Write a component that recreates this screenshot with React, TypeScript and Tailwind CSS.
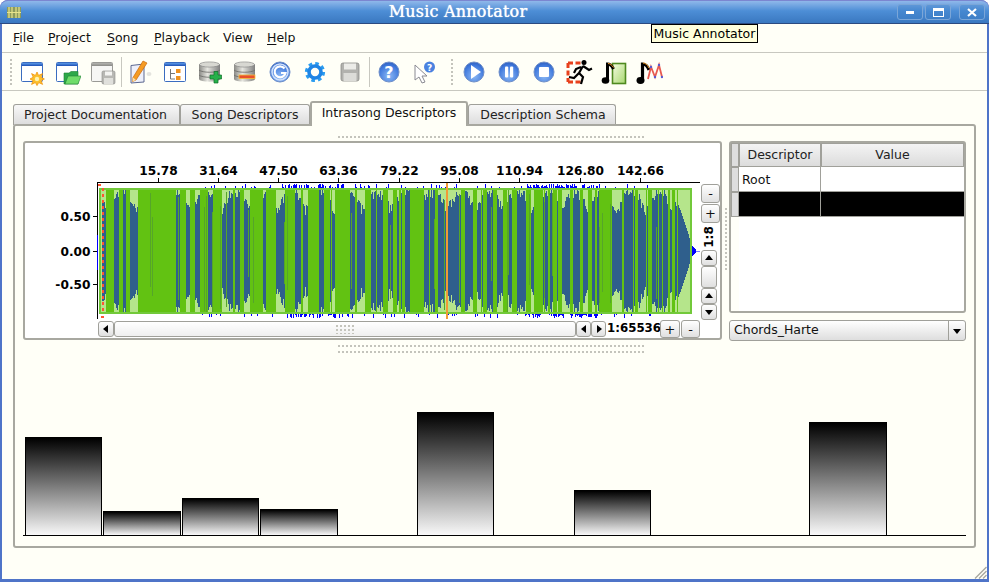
import React from "react";

const rnd = (x: number) => {
  const s = Math.sin(x * 12.9898 + 4.1) * 43758.5453;
  return s - Math.floor(s);
};

const z9 = [[32,58],[72,80],[92,105],[130,242],[255,272],[285,300],[315,340],[355,380],[415,420],[435,447],[465,505],[515,543],[570,600],[618,625],[640,672],[688,704],[720,765],[780,785],[810,828],[865,880],[895,905]];
const z10 = [[5,15],[30,72],[105,115],[185,195],[220,232],[250,262],[280,290],[310,320],[338,350],[380,392],[405,430],[445,450],[460,470],[475,485],[510,520],[565,575],[585,590],[600,635],[665,672],[705,715],[745,755],[785,790],[805,810],[815,825],[830,835]];
const stripes = [
  ...z9.map(([a, b]) => [a / 3 + 95, (b - a) / 3]),
  ...z10.map(([a, b]) => [a / 3 + 400, (b - a) / 3]),
];

function ampAt(x: number) {
  if (x >= 678) return 0.74 * Math.pow((692 - x) / 14, 0.8);
  const swell = Math.abs(Math.sin(x / 9 + 0.6));
  const a = 0.56 + 0.3 * swell + 0.18 * rnd(x);
  return Math.min(0.98, a);
}

const wavePath = (() => {
  let d = "";
  for (let x = 102; x < 692; x++) {
    const a = ampAt(x) * 62;
    d += `M${x} ${251 - a}V${251 + a}`;
  }
  return d;
})();

const thinGreen = (() => {
  let d = "";
  for (let x = 106; x < 676; x++) {
    if (rnd(x * 3.1) < 0.05) d += `M${x} 188V314`;
  }
  return d;
})();

const darkGreen = (() => {
  let d = "";
  for (let x = 106; x < 676; x += 1) {
    if (rnd(x * 4.7) < 0.05) d += `M${x} ${188 + rnd(x) * 40}V${314 - rnd(x + 1) * 40}`;
  }
  return d;
})();

const spikes = (() => {
  let d = "";
  for (let x = 200; x < 662; x++) {
    const dense = (x > 285 && x < 345) || (x > 525 && x < 600);
    const p = dense ? 0.6 : 0.16;
    if (rnd(x * 1.7) < p) d += `M${x} ${188 - 1 - Math.floor(rnd(x) * 4)}V188`;
    if (rnd(x * 2.3) < (dense ? 0.6 : 0.12)) d += `M${x} 314V${315 + Math.floor(rnd(x + 3) * 4)}`;
  }
  return d;
})();

const ticks = [158, 218, 278, 338, 399, 459, 519, 580, 640];
const labels = ["15.78", "31.64", "47.50", "63.36", "79.22", "95.08", "110.94", "126.80", "142.66"];

function Plot() {
  return (
    <svg className="block shrink-0" width="675" height="177" viewBox="25 143 675 177" shapeRendering="crispEdges">
      <path d="M97 182.5H700M97.5 182V319" stroke="#000" fill="none" />
      {ticks.map((t, i) => (
        <g key={t}>
          <path d={`M${t}.5 178V182`} stroke="#000" />
          <text x={t + 0.5} y="175" textAnchor="middle" fontFamily="DejaVu Sans" fontWeight="700" fontSize="12.2" shapeRendering="auto">{labels[i]}</text>
        </g>
      ))}
      {[[216, "0.50"], [251, "0.00"], [284, "-0.50"]].map(([y, t]) => (
        <g key={t as string}>
          <path d={`M93 ${y}.5H97`} stroke="#000" />
          <text x="90.5" y={(y as number) + 4.5} textAnchor="end" fontFamily="DejaVu Sans" fontWeight="700" fontSize="12.2" shapeRendering="auto">{t}</text>
        </g>
      ))}
      <rect x="99" y="188" width="593" height="126" fill="#b5e58b" />
      <path d={wavePath} stroke="#2f5f8c" strokeWidth="1" fill="none" />
      {stripes.map(([x, w], i) => (
        <rect key={i} x={x} y="188" width={Math.max(w, 1)} height="126" fill="#62c212" />
      ))}
      <path d={thinGreen} stroke="#62c212" fill="none" />
      <path d={darkGreen} stroke="#55a52a" fill="none" />
      <rect x="100" y="189" width="591" height="124" fill="none" stroke="#72c93a" strokeWidth="2" />
      <path d={spikes} stroke="#0000ff" fill="none" />
      <path d="M97.5 235V270" stroke="#0000ff" />
      <path d="M692 245L696 250V252L692 257Z" fill="#0000ff" />
      <path d="M696 251.5H701" stroke="#7a7aff" />
      <path d="M103 188V314" stroke="#ff5533" strokeWidth="2" strokeDasharray="3 3" />
      <rect x="98" y="184" width="3" height="2" fill="#ff5533" />
      <rect x="101" y="316" width="3" height="2" fill="#ff5533" />
      <rect x="446" y="183" width="2" height="136" fill="#f19a36" />
    </svg>
  );
}

const btn = "flex items-center justify-center border border-[#a0a09a] rounded-[3px] bg-linear-to-b from-white to-[#e0e0e0] text-[#111] text-[13px] leading-none";
const dots = "bg-[radial-gradient(circle,#c4c4bc_1px,transparent_1px)] bg-[length:4px_4px]";

function Tri({ dir }: { dir: "up" | "down" | "left" | "right" }) {
  const p = { up: "1,7 9,7 5,2", down: "1,3 9,3 5,8", left: "7,1 7,9 2,5", right: "3,1 3,9 8,5" }[dir];
  return <svg width="10" height="10" viewBox="0 0 10 10"><polygon points={p} fill="#000" /></svg>;
}

function RightStrip() {
  return (
    <div className="ml-px w-[19px] flex flex-col pt-[41px]">
      <div className={`${btn} h-[19px] w-[19px]`}>-</div>
      <div className={`${btn} h-[19px] w-[19px] mt-px`}>+</div>
      <div className="h-[27px] w-[16px] flex items-center justify-center">
        <span className="-rotate-90 font-bold text-[12px] text-black whitespace-nowrap">1:8</span>
      </div>
      <div className={`${btn} h-[16px] w-[16px]`}><Tri dir="up" /></div>
      <div className={`${btn} h-[22px] w-[16px]`} />
      <div className={`${btn} h-[16px] w-[16px]`}><Tri dir="up" /></div>
      <div className={`${btn} h-[16px] w-[16px]`}><Tri dir="down" /></div>
    </div>
  );
}

function BottomScroll() {
  return (
    <div className="flex items-center h-[18px] pl-[73px] w-[675px]">
      <div className={`${btn} h-[16px] w-[16px]`}><Tri dir="left" /></div>
      <div className="relative h-[16px] w-[463px] border border-[#a0a09a] rounded-[3px] bg-linear-to-b from-white to-[#efefef] flex items-center justify-center">
        <div className={`h-[10px] w-[20px] ${dots}`} />
      </div>
      <div className={`${btn} h-[16px] w-[15px]`}><Tri dir="left" /></div>
      <div className={`${btn} h-[16px] w-[15px]`}><Tri dir="right" /></div>
      <span className="w-[54px] pl-px font-bold text-[11.8px] text-black whitespace-nowrap">1:65536</span>
      <div className={`${btn} h-[18px] w-[20px]`}>+</div>
      <div className={`${btn} h-[18px] w-[19px] ml-px`}>-</div>
    </div>
  );
}

function TableHead({ w, children }: { w: string; children?: React.ReactNode }) {
  return <div className={`${w} h-[24px] border border-[#a0a09a] bg-linear-to-b from-[#f4f4f4] to-[#dcdcdc] flex items-center justify-center text-[12.5px] text-[#222]`}>{children}</div>;
}

function DescriptorTable() {
  return (
    <div className="h-[172px] border-2 border-[#a8a8a0] rounded-[3px] bg-white flex">
      <div className="w-[8px] bg-[#fffff8] flex flex-col">
        <div className="h-[24px] border border-[#a0a09a] bg-[#dedede]" />
        <div className="h-[25px] border border-[#a0a09a] bg-[#dedede]" />
        <div className="h-[25px] border border-[#a0a09a] bg-[#dedede]" />
      </div>
      <div className="flex-1 flex flex-col">
        <div className="flex">
          <TableHead w="w-[82px]">Descriptor</TableHead>
          <TableHead w="flex-1">Value</TableHead>
        </div>
        <div className="flex h-[25px] border-b border-[#a0a09a]">
          <div className="w-[82px] border-r border-[#a0a09a] pl-[3px] text-[12.5px] leading-[26px] text-[#111]">Root</div>
        </div>
        <div className="flex h-[25px] bg-black border-b border-[#a0a09a]">
          <div className="w-[82px] border-r border-[#a0a09a]" />
        </div>
      </div>
    </div>
  );
}

function Combo() {
  return (
    <div className="mt-[7px] h-[21px] border border-[#a0a09a] rounded-[3px] bg-linear-to-b from-white to-[#dedede] flex items-center text-[12.5px] text-[#111]">
      <span className="flex-1 pl-[4px]">Chords_Harte</span>
      <div className="w-[17px] h-full border-l border-[#a0a09a] flex items-center justify-center"><Tri dir="down" /></div>
    </div>
  );
}

const barHeights = [98, 24, 37, 26, 0, 123, 0, 45, 0, 0, 113, 0];

function Bars() {
  return (
    <div className="mt-auto h-[125px] border-b border-black grid grid-cols-12 items-end pl-[2px]">
      {barHeights.map((h, i) => (
        <div key={i} className="pr-px">
          {h > 0 && (
            <div style={{ height: h }} className="border border-b-0 border-black bg-linear-to-b/srgb from-black to-[#f8f8f8]" />
          )}
        </div>
      ))}
    </div>
  );
}

/* ---------- toolbar icons ---------- */
function Win({ id, gray }: { id: string; gray?: boolean }) {
  const a = gray ? "#b4b4b0" : "#5c9ae8";
  const b = gray ? "#8a8a86" : "#1c4fb4";
  return (
    <>
      <defs>
        <linearGradient id={id} x1="0" y1="0" x2="0" y2="1"><stop offset="0" stopColor={a} /><stop offset="1" stopColor={b} /></linearGradient>
      </defs>
      <rect x="3.5" y="4.5" width="21" height="19" rx="1" fill={gray ? "#f6f6f4" : "#fff"} stroke={gray ? "#9a9a96" : "#3a6cc0"} />
      <rect x="4" y="5" width="20" height="3" fill={`url(#${id})`} />
    </>
  );
}

function Round({ id, children }: { id: string; children?: React.ReactNode }) {
  return (
    <>
      <defs>
        <radialGradient id={id} cx="0.5" cy="0.7" r="0.75"><stop offset="0" stopColor="#8cb8f4" /><stop offset="0.7" stopColor="#3f78dc" /><stop offset="1" stopColor="#2a58b8" /></radialGradient>
      </defs>
      <circle cx="14" cy="14" r="10" fill={`url(#${id})`} stroke="#6f8fc8" strokeWidth="1" />
      {children}
    </>
  );
}

function Db({ id }: { id: string }) {
  return (
    <>
      <defs>
        <linearGradient id={id} x1="0" y1="0" x2="1" y2="0"><stop offset="0" stopColor="#8a8a86" /><stop offset="0.4" stopColor="#e6e6e0" /><stop offset="1" stopColor="#808080" /></linearGradient>
      </defs>
      <path d="M3 7C3 3.5 24 3.5 24 7V21C24 24.5 3 24.5 3 21Z" fill={`url(#${id})`} />
      <ellipse cx="13.5" cy="6.5" rx="10" ry="2.6" fill="#d8d8d2" stroke="#808080" strokeWidth=".6" />
      <path d="M3 12C6 15 21 15 24 12M3 17C6 20 21 20 24 17" stroke="#6a6a66" strokeWidth=".8" fill="none" />
    </>
  );
}

const icons: React.ReactNode[] = [
  <svg key="new" width="28" height="28" viewBox="0 0 28 28"><Win id="w1" /><polygon points="19,14 20.6,17.4 24.6,15.6 23,19.2 26.4,21 23,22.6 24.6,26.4 20.8,24.6 19,27.6 17.4,24.6 13.6,26.4 15,22.6 12,21 15.2,19.2 13.6,15.6 17.4,17.4" fill="#fbc02d" stroke="#f08c00" strokeWidth=".7" /><circle cx="19" cy="21" r="2.2" fill="#fff3b0" /></svg>,
  <svg key="open" width="28" height="28" viewBox="0 0 28 28"><Win id="w2" /><path d="M11 15H16L18 13.5H25V26H11Z" fill="#2da84a" stroke="#1b7f33" strokeWidth=".6" /><path d="M12 26L15 18H28L25 26Z" fill="#6fdc6a" stroke="#1b7f33" strokeWidth=".6" /></svg>,
  <svg key="sv" width="28" height="28" viewBox="0 0 28 28"><Win id="w3" gray /><rect x="14" y="13" width="13" height="13" rx="1.5" fill="#b8b8b4" stroke="#8a8a86" strokeWidth=".6" /><rect x="17" y="13.5" width="7" height="4" fill="#f4f4f2" /><rect x="16" y="20" width="9" height="6" fill="#e0e0dc" /></svg>,
  <svg key="pen" width="28" height="28" viewBox="0 0 28 28"><path d="M5 7.5L18 6V24L5 25Z" fill="#eef0fa" stroke="#5c6890" strokeWidth="1" /><path d="M17 3L21 5L10 22L6.5 23.5L7 19.5Z" fill="#f59b23" stroke="#c9670a" strokeWidth=".7" /><path d="M7 19.5L6.5 23.5L10 22Z" fill="#f7e2b0" /><ellipse cx="23" cy="16" rx="2.5" ry="2" fill="#e4e4de" /></svg>,
  <svg key="tree" width="28" height="28" viewBox="0 0 28 28"><Win id="w4" /><path d="M9.5 11V21H14M9.5 15.5H14" stroke="#777" strokeWidth="1" fill="none" /><rect x="15" y="11" width="4.5" height="4" fill="#f0921e" /><rect x="15" y="18" width="4.5" height="4" fill="#f0921e" /></svg>,
  <svg key="dbp" width="28" height="28" viewBox="0 0 28 28"><Db id="d1" /><path d="M15 15H19V11.5H23V15H26.5V19H23V23H19V19H15Z" transform="translate(-1 2)" fill="#26b04a" stroke="#10702a" strokeWidth=".7" /></svg>,
  <svg key="dbm" width="28" height="28" viewBox="0 0 28 28"><Db id="d2" /><rect x="8" y="17" width="16" height="3.5" fill="#e8502c" stroke="#f4c040" strokeWidth=".8" /></svg>,
  <svg key="g" width="28" height="28" viewBox="0 0 28 28"><Round id="r1"><circle cx="14" cy="14" r="8" fill="none" stroke="#cfe0fa" strokeWidth="1.6" /><path d="M18.5 10.5A5.5 5.5 0 1 0 19.5 15H15" fill="none" stroke="#fff" strokeWidth="2.2" /></Round></svg>,
  <svg key="gear" width="28" height="28" viewBox="0 0 28 28"><circle cx="14" cy="14" r="8.6" fill="none" stroke="#2a9cf0" strokeWidth="3" strokeDasharray="3.6 3.15" /><circle cx="14" cy="14" r="6" fill="none" stroke="#1f84e4" strokeWidth="3.6" /></svg>,
  <svg key="fl" width="28" height="28" viewBox="0 0 28 28"><rect x="5" y="5" width="18" height="18" rx="2" fill="#b2b2ae" stroke="#8c8c88" strokeWidth=".8" /><rect x="8" y="5.5" width="12" height="6" fill="#ecece8" /><rect x="7.5" y="15" width="13" height="8" fill="#dcdcd8" /></svg>,
  null,
  <svg key="help" width="28" height="28" viewBox="0 0 28 28"><Round id="r2"><text x="14" y="20" textAnchor="middle" fontFamily="DejaVu Sans" fontWeight="700" fontSize="16" fill="#fff">?</text></Round></svg>,
  <svg key="cur" width="28" height="28" viewBox="0 0 28 28"><path d="M5 7L5 22L9 19L12 25L15 24L12 18H17Z" fill="#fff" stroke="#8a8a92" strokeWidth="1" /><circle cx="19.5" cy="9" r="5.5" fill="#4a82e0" /><text x="19.5" y="12.5" textAnchor="middle" fontFamily="DejaVu Sans" fontWeight="700" fontSize="9" fill="#fff">?</text></svg>,
];

const transport: React.ReactNode[] = [
  <svg key="pl" width="28" height="28" viewBox="0 0 28 28"><Round id="r3"><path d="M11 7L21 14L11 21Z" fill="#fff" /></Round></svg>,
  <svg key="pa" width="28" height="28" viewBox="0 0 28 28"><Round id="r4"><rect x="10" y="8.5" width="3.2" height="11" rx="1" fill="#fff" /><rect x="15" y="8.5" width="3.2" height="11" rx="1" fill="#fff" /></Round></svg>,
  <svg key="st" width="28" height="28" viewBox="0 0 28 28"><Round id="r5"><rect x="9" y="9" width="10" height="10" rx="1" fill="#fff" /></Round></svg>,
  <svg key="run" width="28" height="28" viewBox="0 0 28 28"><path d="M3 5H19M3 5V24M3 24H16" stroke="#e8401c" strokeWidth="3" strokeDasharray="5 2.5" fill="none" /><circle cx="19" cy="4.5" r="2.5" fill="#000" /><path d="M18 8L14 15L18 19L16 26M18 8L24 12L27 10.5M16 9L11 11L9 15M14 15L9 20L4 19" stroke="#000" strokeWidth="2.2" fill="none" /></svg>,
  <svg key="n1" width="28" height="28" viewBox="0 0 28 28"><defs><linearGradient id="gn" x1="0" y1="0" x2="1" y2="1"><stop offset="0" stopColor="#f4fbe0" /><stop offset="1" stopColor="#a8d870" /></linearGradient></defs><rect x="12.5" y="5.5" width="13" height="20" fill="url(#gn)" stroke="#4f8a20" strokeWidth="1.6" /><path d="M7.5 22V6C10 6 12 8 13.5 11" stroke="#000" strokeWidth="3" fill="none" /><path d="M8 5.5C10 5.5 12 7 13.5 9.5" stroke="#f59b23" strokeWidth="1" fill="none" /><ellipse cx="5.5" cy="22.5" rx="3.8" ry="3.2" fill="#000" /></svg>,
  <svg key="n2" width="28" height="28" viewBox="0 0 28 28"><path d="M7.5 22V6C10 6 12.5 8 14 12" stroke="#000" strokeWidth="3.2" fill="none" /><path d="M8 5C10 5 12.5 6.5 14 10" stroke="#f59b23" strokeWidth="1" fill="none" /><ellipse cx="5.5" cy="22.5" rx="4" ry="3.4" fill="#000" /><polyline points="13,21 16,9 20,19 24,7 27,19" fill="none" stroke="#e85a50" strokeWidth="1.8" /><g fill="#5a5ad0"><circle cx="16" cy="9" r="1.2" /><circle cx="20" cy="19" r="1.2" /><circle cx="24" cy="7" r="1.2" /><circle cx="27" cy="19" r="1.2" /></g></svg>,
];

function Handle() {
  return <div className={`w-[5px] h-[28px] ${dots} bg-[length:3px_3px]`} />;
}

function Sep() {
  return <div className="w-px h-[30px] bg-[#c8c8c0]" />;
}

function Slot({ children }: { children: React.ReactNode }) {
  return <div className="w-[35px] h-[30px] flex items-center justify-center">{children}</div>;
}

function Toolbar() {
  return (
    <div className="h-[38px] border-b border-[#c8c8c0] flex items-center pl-[7px]">
      <Handle />
      {icons.slice(0, 3).map((c, i) => <Slot key={i}>{c}</Slot>)}
      <div className="w-[2px]" />
      <Sep />
      {icons.slice(3, 10).map((c, i) => <Slot key={i}>{c}</Slot>)}
      <div className="w-[2px]" />
      <Sep />
      <div className="w-[1px]" />
      {icons.slice(11).map((c, i) => <Slot key={i}>{c}</Slot>)}
      <div className="w-[9px]" />
      <Handle />
      <div className="w-[1px]" />
      {transport.map((c, i) => <Slot key={i}>{c}</Slot>)}
    </div>
  );
}

function MenuItem({ first, rest, w }: { first: string; rest: string; w: string }) {
  return <div className={w}><span className="underline underline-offset-2">{first}</span>{rest}</div>;
}

function Menu() {
  return (
    <div className="h-[29px] pt-px border-b border-[#c8c8c0] flex items-center pl-[11px] text-[12.5px] text-[#111]">
      <MenuItem first="F" rest="ile" w="w-[35px]" />
      <MenuItem first="P" rest="roject" w="w-[59px]" />
      <MenuItem first="S" rest="ong" w="w-[47px]" />
      <MenuItem first="P" rest="layback" w="w-[69px]" />
      <div className="w-[44px]">View</div>
      <MenuItem first="H" rest="elp" w="w-[40px]" />
    </div>
  );
}

function Tab({ label, w, active }: { label: string; w: string; active?: boolean }) {
  return (
    <div
      className={
        active
          ? `${w} h-[25px] pb-[2px] relative z-10 border-2 border-b-0 border-[#a8a8a0] rounded-t-[3px] bg-[#fffff7] flex items-center justify-center text-[12.5px] text-[#111]`
          : `${w} h-[21px] border border-b-0 border-[#a0a09a] rounded-t-[3px] bg-linear-to-b from-[#f8f8f8] to-[#dcdcdc] flex items-center justify-center text-[12.5px] text-[#222]`
      }
    >
      {label}
    </div>
  );
}

function WinBtn({ children }: { children: React.ReactNode }) {
  return <div className="w-[26px] h-[16px] rounded-[3px] border border-[#7ba6d8] bg-[#3d7fc7]/40 flex items-center justify-center">{children}</div>;
}

function TitleBar() {
  return (
    <div className="h-[24px] rounded-t-[8px] bg-linear-to-b from-[#8fb8ea] via-[#4d8ed6] via-45% to-[#3a78c0] border-t border-t-[#7b86d0] border-b border-b-[#2b4a80] flex items-center relative">
      <svg className="ml-[7px]" width="14" height="11" viewBox="0 0 14 11">
        <rect width="14" height="11" fill="#8c9a5c" />
        <path d="M2 0V11M5 0V11M9 0V11M12 0V11M0 5.5H14" stroke="#e8e48c" strokeWidth="1.2" />
      </svg>
      <div className="flex-1 text-center font-['DejaVu_Serif',serif] text-[16px] text-white tracking-[0.2px] pr-[9px] pl-[7px] [text-shadow:0_0_1px_#fff]">Music Annotator</div>
      <div className="flex gap-[2px] pr-[4px]">
        <WinBtn><div className="w-[8px] h-[3px] bg-white" /></WinBtn>
        <WinBtn><div className="w-[11px] h-[9px] border border-t-[3px] border-white" /></WinBtn>
        <div className="w-[4px]" />
        <WinBtn>
          <svg width="10" height="9" viewBox="0 0 10 9"><path d="M1 1L9 8M9 1L1 8" stroke="#fff" strokeWidth="2.2" /></svg>
        </WinBtn>
      </div>
    </div>
  );
}

export default function App() {
  return (
    <div className="relative w-[989px] h-[582px] overflow-hidden bg-white font-['DejaVu_Sans',sans-serif]">
      <div className="h-full flex flex-col rounded-t-[8px] bg-[#4f74c8] ">
        <TitleBar />
        <div className="flex-1 mx-[2px] mb-[3px] bg-[#fffff7] relative flex flex-col">
          <Menu />
          <Toolbar />
          <div className="flex pl-[11px] pt-[10px] items-end">
            <Tab label="Project Documentation" w="w-[167px] pr-[2px]" />
            <Tab label="Song Descriptors" w="w-[130px]" />
            <Tab label="Intrasong Descriptors" w="w-[158px] -mb-px" active />
            <Tab label="Description Schema" w="w-[148px] pl-[2px]" />
          </div>
          <div className="ml-[11px] w-[963px] h-[424px] border-2 border-[#a8a8a0] rounded-[3px] px-[8px] flex flex-col -mt-px">
            <div className={`self-start ml-[314px] h-[4px] w-[308px] mt-[9px] mb-[2px] ${dots}`} />
            <div className="flex h-[200px]">
              <div className="w-[699px] h-[199px] border-2 border-[#a8a8a0] rounded-[3px] bg-white">
                <div className="flex">
                  <Plot />
                  <RightStrip />
                </div>
                <BottomScroll />
              </div>
              <div className="w-[7px] flex items-start justify-center pt-[66px]">
                <div className={`w-[4px] h-[64px] ${dots}`} />
              </div>
              <div className="w-[237px]">
                <DescriptorTable />
                <Combo />
              </div>
            </div>
            <div className={`self-start ml-[314px] h-[14px] w-[308px] mt-[2px] ${dots} bg-[length:4px_6px]`} />
            <Bars />
            <div className="h-[10px]" />
          </div>
          <svg className="absolute right-0 bottom-0" width="13" height="13" viewBox="0 0 13 13">
            <path d="M12.5 1L1 12.5M12.5 5L5 12.5M12.5 9L9 12.5" stroke="#a8a8a0" strokeWidth="1.4" />
          </svg>
        </div>
      </div>
      <div className="absolute left-[651px] top-[24px] w-[107px] h-[19px] border border-black bg-[#ffffdc] text-black text-[12.5px] leading-[17px] text-center">Music Annotator</div>
    </div>
  );
}
